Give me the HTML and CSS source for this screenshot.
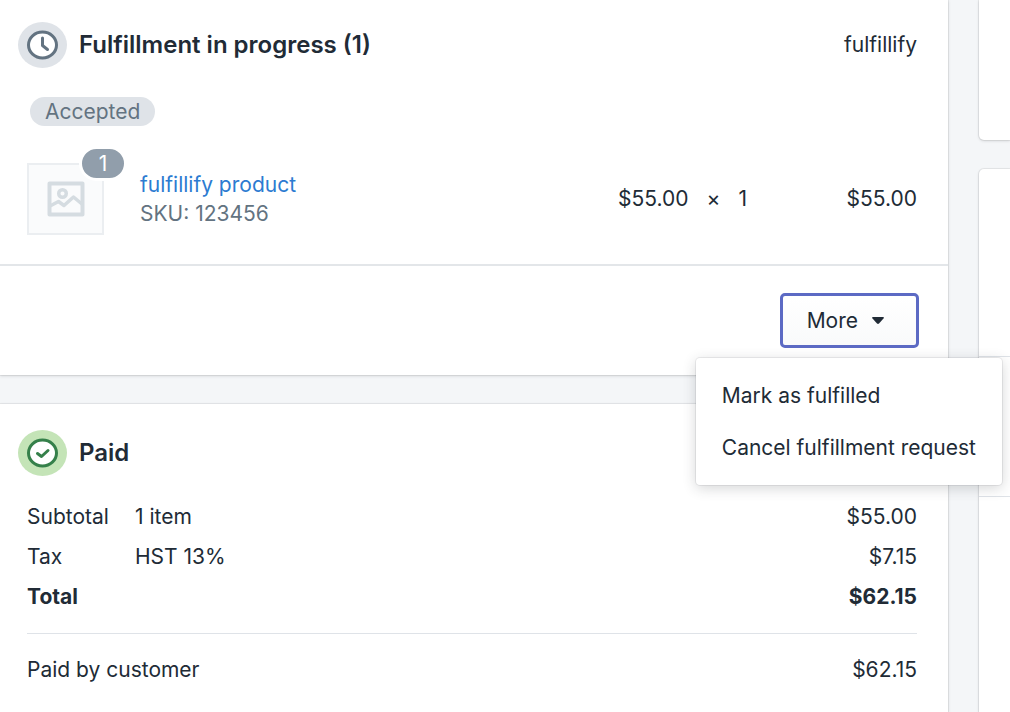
FILE: index.html
```html
<!DOCTYPE html>
<html lang="en">
<head>
    <meta charset="UTF-8" />
    <meta name="viewport" content="width=device-width, initial-scale=1.0"/>
    <title>Order details</title>
    <link rel="stylesheet" href="styles.css">
</head>
<body>

    <div class="page">
        <main class="main">
            <section class="card">
                <div class="card-header">
                    <svg class="status-icon" viewBox="0 0 49 46" aria-hidden="true">
                        <ellipse cx="24.5" cy="23" rx="24.5" ry="23" fill="#dfe3e8"/>
                        <ellipse cx="24.5" cy="23" rx="14" ry="13" fill="#fff" stroke="#637381" stroke-width="3"/>
                        <path d="M24.5 16v7.5l5 4" fill="none" stroke="#637381" stroke-width="3" stroke-linecap="round" stroke-linejoin="round"/>
                    </svg>
                    <h2>Fulfillment in progress (1)</h2>
                    <span class="service">fulfillify</span>
                </div>

                <span class="badge">Accepted</span>

                <div class="product">
                    <div class="thumb">
                        <svg width="38" height="36" viewBox="0 0 38 36" aria-hidden="true">
                            <g fill="none" stroke="#d5dce1" stroke-width="4" stroke-linejoin="round">
                                <rect x="2.5" y="2.5" width="33" height="31"/>
                                <circle cx="15.5" cy="12.5" r="3.8" stroke-width="3.5"/>
                                <path d="M3 25l8.5-4.5 5.5 4 9.5-8.5 9 7.5" stroke-width="3.5"/>
                            </g>
                        </svg>
                        <span class="count">1</span>
                    </div>
                    <div class="info">
                        <a href="#">fulfillify product</a>
                        <span class="sku">SKU: 123456</span>
                    </div>
                    <div class="price">
                        <span>$55.00</span>
                        <span class="times">×</span>
                        <span>1</span>
                    </div>
                    <div class="line-total">$55.00</div>
                </div>

                <div class="card-footer">
                    <div class="dropdown">
                        <button type="button" class="more-button" aria-haspopup="true" aria-expanded="true">
                            More
                            <svg width="12" height="7" viewBox="0 0 12 7" aria-hidden="true">
                                <path d="M1 0h10q1.5 0 .5 1.500L7 6.500q-1 .8-2 0L.5 1.500Q-.5 0 1 0z" fill="#212b36"/>
                            </svg>
                        </button>
                        <div class="menu">
                            <button type="button">Mark as fulfilled</button>
                            <button type="button">Cancel fulfillment request</button>
                        </div>
                    </div>
                </div>
            </section>

            <section class="card">
                <div class="card-header">
                    <svg class="status-icon" viewBox="0 0 49 46" aria-hidden="true">
                        <ellipse cx="24.5" cy="23" rx="24.5" ry="23" fill="#c4e4b7"/>
                        <ellipse cx="24.5" cy="23" rx="14" ry="13" fill="#fff" stroke="#35804a" stroke-width="3"/>
                        <path d="M19.5 23.5l4 3 6.5-6" fill="none" stroke="#35804a" stroke-width="3" stroke-linecap="round" stroke-linejoin="round"/>
                    </svg>
                    <h2>Paid</h2>
                </div>

                <table class="summary">
                    <tbody>
                        <tr><td class="label">Subtotal</td><td>1 item</td><td class="amount">$55.00</td></tr>
                        <tr><td class="label">Tax</td><td>HST 13%</td><td class="amount">$7.15</td></tr>
                        <tr class="total"><td class="label">Total</td><td></td><td class="amount">$62.15</td></tr>
                    </tbody>
                    <tbody class="paid">
                        <tr><td colspan="2">Paid by customer</td><td class="amount">$62.15</td></tr>
                    </tbody>
                </table>
            </section>
        </main>

        <aside class="sidebar">
            <div class="side-card">
                <div class="side-section"></div>
            </div>
            <div class="side-card">
                <div class="side-section side-tall"></div>
                <div class="side-section"></div>
                <div class="side-section"></div>
            </div>
        </aside>
    </div>

</body>
</html>
```

FILE: styles.css
```css
* {
    box-sizing: border-box;
}

body {
    margin: 0;
    font-family: Inter, sans-serif;
    font-size: 21px;
    line-height: 28px;
    color: #212b36;
    background: #f4f6f8;
}

.page {
    display: grid;
    grid-template-columns: minmax(0, 1fr) 31px;
    gap: 31px;
    height: 100vh;
    overflow: hidden;
}

.main,
.sidebar {
    display: flex;
    flex-direction: column;
    gap: 29px;
}

.card,
.side-card {
    background: #fff;
    box-shadow: 0 0 0 1px rgba(63, 63, 68, 0.08), 0 1px 3px rgba(63, 63, 68, 0.18);
}

.card:last-child,
.side-card:last-child {
    flex-grow: 1;
}

.card-header {
    display: flex;
    align-items: center;
    gap: 12px;
    padding: 22px 31px 0 18px;
}

.card + .card .card-header {
    padding-top: 26px;
}

.status-icon {
    width: 49px;
    height: 46px;
}

.card-header h2 {
    margin: 0;
    font-size: 24px;
    font-weight: 600;
}

.service {
    margin-left: auto;
}

.badge {
    display: block;
    width: fit-content;
    margin: 29px 0 0 30px;
    padding: 0 15px;
    border-radius: 15px;
    line-height: 29px;
    color: #637381;
    background: #dfe3e8;
}

.product {
    display: flex;
    align-items: center;
    padding: 37px 31px 29px 27px;
    border-bottom: 2px solid #e3e6e9;
}

.thumb {
    position: relative;
    display: flex;
    align-items: center;
    justify-content: center;
    width: 77px;
    height: 72px;
    border: 2px solid #ebeef1;
    background: #fafbfc;
}

.count {
    position: absolute;
    top: -19px;
    right: -25px;
    width: 48px;
    border: 3px solid #fff;
    border-radius: 18px;
    line-height: 29px;
    text-align: center;
    color: #fff;
    background: #919eab;
}

.info {
    display: flex;
    flex-direction: column;
    flex-grow: 1;
    margin-left: 36px;
    line-height: 29px;
}

.info a {
    color: #2c7bd1;
    text-decoration: none;
}

.sku {
    color: #637381;
}

.price {
    display: flex;
    gap: 18px;
}

.line-total {
    width: 170px;
    text-align: right;
}

.card-footer {
    display: flex;
    justify-content: flex-end;
    padding: 27px 29px 27px 27px;
}

.dropdown {
    position: relative;
}

.more-button {
    display: flex;
    align-items: center;
    gap: 14px;
    height: 55px;
    padding: 0 32px 0 24px;
    border: 3px solid #5c6ac4;
    border-radius: 5px;
    font: inherit;
    color: inherit;
    background: linear-gradient(#fff, #f9fafb);
}

.menu {
    position: absolute;
    top: 65px;
    right: -83px;
    padding: 12px 0 11px;
    border-radius: 4px;
    background: #fff;
    box-shadow: 0 0 0 1px rgba(39, 44, 48, 0.08), 0 3px 14px rgba(39, 44, 48, 0.2);
}

.menu button {
    display: block;
    width: 100%;
    padding: 12px 26px;
    border: none;
    font: inherit;
    text-align: left;
    white-space: nowrap;
    color: inherit;
    background: none;
}

.summary {
    width: calc(100% - 58px);
    margin: 21px 31px 0 27px;
    border-collapse: collapse;
}

.summary td {
    height: 40px;
    padding: 0;
}

.summary .label {
    width: 108px;
}

.summary .amount {
    text-align: right;
}

.summary .total td {
    height: 56px;
    padding-bottom: 16px;
    font-weight: 700;
}

.paid {
    border-top: 1px solid #dfe3e8;
}

.summary .paid td {
    height: 56px;
    padding-top: 18px;
}

/* only the left edge of the side column is in view */
.side-card:first-child {
    border-radius: 0 0 0 5px;
}

.side-card:last-child {
    border-radius: 5px 0 0 0;
}

.side-section {
    height: 140px;
}

.side-section + .side-section {
    border-top: 1px solid #dfe3e8;
}

.side-tall {
    height: 187px;
}
```
